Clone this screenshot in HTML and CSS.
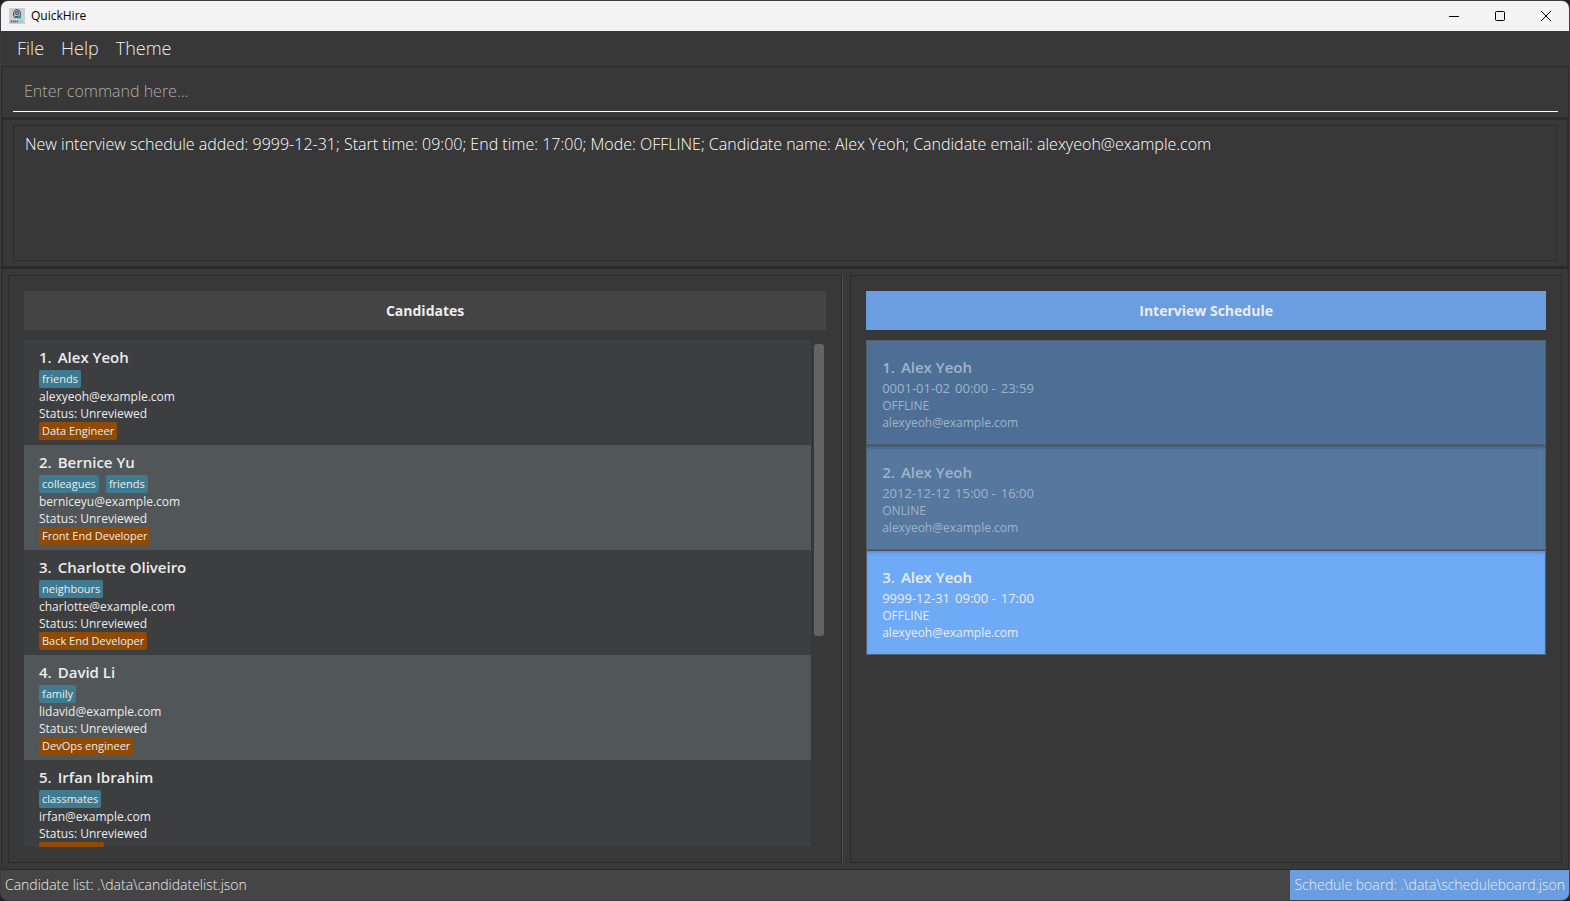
FILE: index.html
```html
<!DOCTYPE html>
<html lang="en">
<head>
<meta charset="utf-8">
<title>QuickHire</title>
<link rel="stylesheet" href="styles.css">
</head>
<body>
<div class="window">
  <header class="titlebar">
    <svg class="app-icon" viewBox="0 0 16 16" aria-hidden="true">
      <rect width="16" height="16" fill="#cdd0d0"/>
      <path d="M5.200 8.500C3.600 6 5 1.700 8 1.700s4.400 4.300 2.800 6.800" fill="none" stroke="#4b597c" stroke-width="1.200"/>
      <circle cx="8" cy="5" r="1.700" fill="#8791a8" stroke="#3b4a70" stroke-width=".8"/>
      <path d="M5 10c0-3 6-3 6 0z" fill="#4b597c"/>
      <path d="M9 7.500h3v3H9z" fill="#25a094"/>
      <path d="M1.500 13.500h8" stroke="#5c6a90" stroke-width="2" stroke-dasharray="1.500 .5"/>
      <path d="M9.500 13.500h5" stroke="#7cc7c1" stroke-width="2" stroke-dasharray="1.200 .5"/>
    </svg>
    <h1 class="app-name">QuickHire</h1>
    <div class="window-buttons">
      <button class="window-button" type="button" aria-label="Minimize"><svg viewBox="0 0 10 10"><path d="M0 5.500h10"/></svg></button>
      <button class="window-button" type="button" aria-label="Maximize"><svg viewBox="0 0 10 10"><rect x=".5" y=".5" width="9" height="9" rx="1"/></svg></button>
      <button class="window-button" type="button" aria-label="Close"><svg viewBox="0 0 10 10"><path d="M0 0l10 10M10 0L0 10"/></svg></button>
    </div>
  </header>
  <nav class="menubar">
    <button class="menu" type="button">File</button>
    <button class="menu" type="button">Help</button>
    <button class="menu" type="button">Theme</button>
  </nav>
  <div class="command">
    <input class="command-input" type="text" aria-label="Command" placeholder="Enter command here...">
  </div>
  <div class="result">
    <output class="result-text">New interview schedule added: 9999-12-31; Start time: 09:00; End time: 17:00; Mode: OFFLINE; Candidate name: Alex Yeoh; Candidate email: alexyeoh@example.com</output>
  </div>
  <main class="panels">
    <section class="panel panel-candidates">
      <h2 class="panel-title">Candidates</h2>
      <div class="list-area">
        <ol class="list">
          <li class="candidate">
            <h3 class="name"><span>1.</span><span>Alex Yeoh</span></h3>
            <div class="tags"><span class="tag">friends</span></div>
            <p class="field">alexyeoh@example.com</p>
            <p class="field">Status: Unreviewed</p>
            <div class="tags"><span class="tag tag-job">Data Engineer</span></div>
          </li>
          <li class="candidate">
            <h3 class="name"><span>2.</span><span>Bernice Yu</span></h3>
            <div class="tags"><span class="tag">colleagues</span><span class="tag">friends</span></div>
            <p class="field">berniceyu@example.com</p>
            <p class="field">Status: Unreviewed</p>
            <div class="tags"><span class="tag tag-job">Front End Developer</span></div>
          </li>
          <li class="candidate">
            <h3 class="name"><span>3.</span><span>Charlotte Oliveiro</span></h3>
            <div class="tags"><span class="tag">neighbours</span></div>
            <p class="field">charlotte@example.com</p>
            <p class="field">Status: Unreviewed</p>
            <div class="tags"><span class="tag tag-job">Back End Developer</span></div>
          </li>
          <li class="candidate">
            <h3 class="name"><span>4.</span><span>David Li</span></h3>
            <div class="tags"><span class="tag">family</span></div>
            <p class="field">lidavid@example.com</p>
            <p class="field">Status: Unreviewed</p>
            <div class="tags"><span class="tag tag-job">DevOps engineer</span></div>
          </li>
          <li class="candidate">
            <h3 class="name"><span>5.</span><span>Irfan Ibrahim</span></h3>
            <div class="tags"><span class="tag">classmates</span></div>
            <p class="field">irfan@example.com</p>
            <p class="field">Status: Unreviewed</p>
            <div class="tags"><span class="tag tag-job tag-cut"></span></div>
          </li>
        </ol>
        <div class="scrollbar"><div class="scrollbar-thumb"></div></div>
      </div>
    </section>
    <div class="splitter"></div>
    <section class="panel panel-schedule">
      <h2 class="panel-title panel-title-blue">Interview Schedule</h2>
      <ol class="list">
        <li class="interview interview-past">
          <h3 class="name"><span>1.</span><span>Alex Yeoh</span></h3>
          <p class="field when"><span>0001-01-02</span><span>00:00 -</span><span>23:59</span></p>
          <p class="field">OFFLINE</p>
          <p class="field">alexyeoh@example.com</p>
        </li>
        <li class="interview interview-past interview-alt">
          <h3 class="name"><span>2.</span><span>Alex Yeoh</span></h3>
          <p class="field when"><span>2012-12-12</span><span>15:00 -</span><span>16:00</span></p>
          <p class="field">ONLINE</p>
          <p class="field">alexyeoh@example.com</p>
        </li>
        <li class="interview">
          <h3 class="name"><span>3.</span><span>Alex Yeoh</span></h3>
          <p class="field when"><span>9999-12-31</span><span>09:00 -</span><span>17:00</span></p>
          <p class="field">OFFLINE</p>
          <p class="field">alexyeoh@example.com</p>
        </li>
      </ol>
    </section>
  </main>
  <footer class="statusbar">
    <span class="status">Candidate list: .\data\candidatelist.json</span>
    <span class="status status-blue">Schedule board: .\data\scheduleboard.json</span>
  </footer>
</div>
</body>
</html>
```
FILE: styles.css
```css
* { box-sizing: border-box; }

body {
  margin: 0;
  background: #222;
  color: #ececec;
  font-family: "Open Sans", "Noto Sans", sans-serif;
}

h1, h2, h3, p, ol { margin: 0; padding: 0; }
ol { list-style: none; }
button, input { font: inherit; color: inherit; background: none; border: 0; padding: 0; margin: 0; }

.window {
  display: flex;
  flex-direction: column;
  height: 100vh;
  border: 1px solid #403c3f;
  border-radius: 8px;
  overflow: hidden;
  background: #383838;
}

.titlebar {
  display: flex;
  align-items: center;
  height: 30px;
  padding-left: 8px;
  background: #f3f3f3;
  color: #000;
}
.app-icon { width: 16px; height: 16px; }
.app-name { margin-left: 6px; font-size: 12px; font-weight: 400; line-height: 16px; }
.window-buttons { display: flex; margin-left: auto; }
.window-button { display: flex; align-items: center; justify-content: center; width: 46px; height: 30px; }
.window-button svg { width: 10px; height: 10px; fill: none; stroke: #000; overflow: visible; }

.menubar {
  display: flex;
  gap: 17px;
  height: 36px;
  padding: 0 16px 2px;
  border-bottom: 1px solid #2b2b2b;
}
.menu { font-size: 18px; font-weight: 300; }

.command {
  height: 53px;
  padding: 8px 10px 5px 11px;
  border: solid #2b2b2b;
  border-width: 0 1px 3px;
}
.command-input {
  display: block;
  width: 100%;
  height: 37px;
  padding: 0 11px 4px;
  border-bottom: 1px solid #fff;
  font-size: 16px;
  font-weight: 300;
  outline: 0;
}
.command-input::placeholder { color: #adadad; opacity: 1; }

.result {
  height: 149px;
  padding: 5px 10px;
  border: solid #2b2b2b;
  border-width: 0 2px 3px;
}
.result-text {
  display: block;
  height: 136px;
  padding: 6px 11px;
  border: 1px solid #2b2b2b;
  color: #fff;
  font-size: 16px;
  font-weight: 300;
  line-height: 24px;
}

.panels {
  display: flex;
  flex: 1;
  min-height: 0;
  padding: 6px;
  border: solid #2b2b2b;
  border-width: 0 1px 1px;
}
.panel {
  display: flex;
  flex-direction: column;
  min-width: 0;
  padding: 15px;
  border: 1px solid #2b2b2b;
}
.panel-candidates { flex: 59 1 0; }
.panel-schedule { flex: 50 1 0; }
.splitter { width: 8px; border-left: 1px solid #505050; }

.panel-title {
  height: 39px;
  margin-bottom: 10px;
  background: #444;
  font-size: 14px;
  font-weight: 700;
  line-height: 39px;
  text-align: center;
}
.panel-title-blue { background: #6a9ee1; }

.list-area { display: flex; flex: 1; min-height: 0; }
.list-area .list { flex: 1; overflow: hidden; }
.scrollbar { width: 15px; padding: 4px 2px 0 3px; }
.scrollbar-thumb { height: 58%; border-radius: 3px; background: #636363; }

.name { display: flex; gap: 6px; font-size: 15px; font-weight: 600; line-height: 17px; padding-bottom: 4px; }
.field { font-size: 12px; line-height: 17px; }

.candidate { height: 105px; padding: 9px 15px 5px; background: #3c3e3f; }
.candidate:nth-child(even) { background: #515658; }
.tags { display: flex; gap: 7px; }
.tag {
  height: 18px;
  padding: 0 3px;
  border-radius: 2px;
  background: #3e7b91;
  font-size: 11px;
  line-height: 17px;
}
.tag-job { background: #8f4a06; }
.tag-cut { width: 65px; }

.interview {
  padding: 18px 15px 13px;
  border: 1px solid #56616e;
  background: #6eaaf5;
}
.interview-past { background: #4d6f96; color: #a0b3c9; }
.interview-alt { background: #56779e; }
.interview + .interview { border-top-color: #47515c; box-shadow: inset 0 3px 4px -2px rgba(0, 0, 0, .25); }
.when { display: flex; gap: 5px; font-size: 13px; }

.statusbar {
  display: flex;
  justify-content: space-between;
  height: 30px;
  background: #454545;
}
.status { padding: 0 4px; font-size: 14px; font-weight: 300; line-height: 30px; }
.status-blue { background: #6a9ee1; }
```
